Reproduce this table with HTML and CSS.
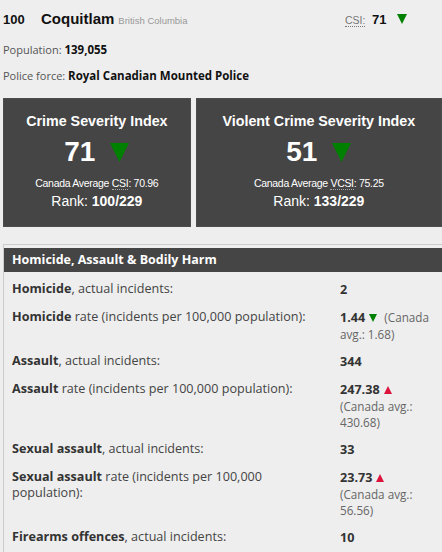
FILE: index.html
```html
<!DOCTYPE html>
<html>
<head>
<meta charset="utf-8">
<link rel="stylesheet" href="styles.css">
</head>
<body>
<div class="page">
  <div class="head">
    <div class="title">
      <span class="rank">100</span>
      <span class="city">Coquitlam</span>
      <span class="prov">British Columbia</span>
    </div>
    <div class="csi">
      <abbr class="abbr">CSI:</abbr>
      <b>71</b>
      <svg class="tri-head" viewBox="0 0 10 10" width="10" height="10"><polygon points="0,0 10,0 5,10" fill="#008000"/></svg>
    </div>
  </div>
  <p class="meta">Population: <b>139,055</b></p>
  <p class="meta">Police force: <b>Royal Canadian Mounted Police</b></p>

  <div class="boxes">
    <div class="box box-left">
      <div class="box-title">Crime Severity Index</div>
      <div class="box-value">71 <svg class="tri-big" viewBox="0 0 19 19" width="19" height="19"><polygon points="0,0 19,0 9.5,19" fill="#008000"/></svg></div>
      <div class="box-avg">Canada Average <abbr class="abbr">CSI</abbr>: 70.96</div>
      <div class="box-rank">Rank: <b>100/229</b></div>
    </div>
    <div class="box box-right">
      <div class="box-title">Violent Crime Severity Index</div>
      <div class="box-value">51 <svg class="tri-big" viewBox="0 0 19 19" width="19" height="19"><polygon points="0,0 19,0 9.5,19" fill="#008000"/></svg></div>
      <div class="box-avg">Canada Average <abbr class="abbr">VCSI</abbr>: 75.25</div>
      <div class="box-rank">Rank: <b>133/229</b></div>
    </div>
  </div>

  <div class="stats">
    <div class="stats-head">Homicide, Assault &amp; Bodily Harm</div>
    <div class="row first">
      <div class="label"><b>Homicide</b>, actual incidents:</div>
      <div class="val"><b>2</b></div>
    </div>
    <div class="row">
      <div class="label"><b>Homicide</b> rate (incidents per 100,000 population):</div>
      <div class="val"><b>1.44</b> <svg class="tri-s" viewBox="0 0 8 8" width="8" height="8"><polygon points="0,0 8,0 4,8" fill="#008000"/></svg> &nbsp;(Canada avg.: 1.68)</div>
    </div>
    <div class="row">
      <div class="label"><b>Assault</b>, actual incidents:</div>
      <div class="val"><b>344</b></div>
    </div>
    <div class="row">
      <div class="label"><b>Assault</b> rate (incidents per 100,000 population):</div>
      <div class="val"><b>247.38</b> <svg class="tri-s" viewBox="0 0 8 8" width="8" height="8"><polygon points="0,8 8,8 4,0" fill="#dc143c"/></svg> (Canada avg.: 430.68)</div>
    </div>
    <div class="row">
      <div class="label"><b>Sexual assault</b>, actual incidents:</div>
      <div class="val"><b>33</b></div>
    </div>
    <div class="row">
      <div class="label"><b>Sexual assault</b> rate (incidents per 100,000 population):</div>
      <div class="val"><b>23.73</b> <svg class="tri-s" viewBox="0 0 8 8" width="8" height="8"><polygon points="0,8 8,8 4,0" fill="#dc143c"/></svg> (Canada avg.: 56.56)</div>
    </div>
    <div class="row">
      <div class="label"><b>Firearms offences</b>, actual incidents:</div>
      <div class="val"><b>10</b></div>
    </div>
  </div>
</div>
</body>
</html>
```

FILE: styles.css
```css
html, body {
  margin: 0;
  padding: 0;
  background: #eeeeee;
}
body {
  font-family: "Liberation Sans", Arial, sans-serif;
  color: #222;
  width: 442px;
  overflow: hidden;
}
.page {
  padding: 10px 0 0 3px;
}
.head {
  display: flex;
  justify-content: space-between;
  align-items: baseline;
  height: 27px;
}
.title {
  display: flex;
  align-items: baseline;
}
.rank {
  font-size: 13px;
  font-weight: bold;
  color: #111;
  width: 38px;
}
.city {
  font-size: 15px;
  font-weight: bold;
  color: #111;
  margin-right: 4px;
}
.prov {
  font-size: 9.5px;
  color: #999;
}
.csi {
  width: 97px;
  font-size: 13px;
  color: #111;
}
.csi .abbr {
  font-size: 10.5px;
  color: #777;
  margin-right: 3px;
}
.abbr {
  text-decoration: none;
  border-bottom: 1px dotted currentColor;
}
.tri-head {
  margin-left: 7px;
}
.meta {
  margin: 0;
  font-family: "Open Sans", sans-serif;
  font-size: 11px;
  font-weight: 400;
  color: #555;
  line-height: 26px;
}
.meta b {
  color: #111;
  font-weight: 700;
  font-size: 11.5px;
}
.boxes {
  display: flex;
  gap: 5px;
  margin-top: 9px;
}
.box {
  background: #454545;
  color: #fff;
  height: 129px;
  display: flex;
  flex-direction: column;
  align-items: center;
  box-sizing: border-box;
  padding-top: 14px;
  border: 1px solid #4c4c4c;
}
.box-left { width: 189px; }
.box-right { width: 248px; }
.box-title {
  font-size: 14.3px;
  font-weight: bold;
  line-height: 16px;
}
.box-value {
  font-size: 28px;
  font-weight: bold;
  line-height: 34px;
  margin-top: 6px;
  display: flex;
  align-items: center;
  gap: 15px;
}
.box-avg {
  font-size: 10.5px;
  letter-spacing: -0.3px;
  margin-top: 8px;
  line-height: 13px;
}
.box-avg .abbr { border-bottom-color: #aaa; }
.box-rank {
  font-size: 14px;
  line-height: 18px;
  margin-top: 2px;
}
.stats {
  margin-top: 17px;
  border-left: 1px solid #ccc;
  border-top: 1px solid #ccc;
  padding-bottom: 20px;
  font-family: "Open Sans", sans-serif;
  font-size: 12.6px;
  color: #444;
}
.stats-head {
  background: #454545;
  color: #fff;
  font-weight: bold;
  font-size: 12.5px;
  height: 24px;
  line-height: 24px;
  padding-left: 8px;
  margin-top: 3px;
}
.row {
  display: flex;
  padding: 6px 0 5px 8px;
  line-height: 16px;
}
.row.first { padding-top: 9px; }
.label {
  width: 328px;
  padding-right: 14px;
  box-sizing: border-box;
}
.label b {
  color: #333;
}
.val {
  width: 92px;
  font-size: 11.7px;
  color: #666;
}
.val b {
  font-size: 12.6px;
  color: #333;
}
.tri-s {
  margin: 0 1px;
}
```
